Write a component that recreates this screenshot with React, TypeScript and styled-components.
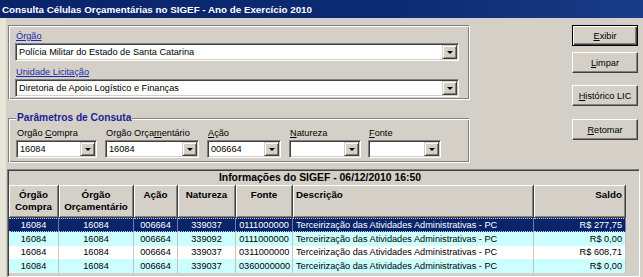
import React from 'react';
import styled, { createGlobalStyle } from 'styled-components';

const Global = createGlobalStyle`
  html, body { margin: 0; padding: 0; background: #d4d0c8; }
  body { font-family: "Liberation Sans", Arial, sans-serif; font-size: 9.2px; color: #000; }
  * { box-sizing: border-box; }
`;

const Window = styled.div`
  width: 643px;
  height: 277px;
  overflow: hidden;
  background: #d4d0c8;
  display: flex;
  flex-direction: column;
`;

const TitleBar = styled.div`
  height: 18px;
  flex: none;
  background: linear-gradient(to right, #0a246a 0%, #0c2a72 60%, #1a3c86 100%);
  color: #fff;
  font-weight: bold;
  font-size: 9.8px;
  display: flex;
  align-items: center;
  padding-left: 2px;
  white-space: nowrap;
`;

const Frame = styled.div`
  flex: 1;
  display: flex;
  min-height: 0;
`;

const SideStrip = styled.div`
  width: 6px;
  flex: none;
  background: #e7e5d7;
`;

const Main = styled.div`
  flex: 1;
  display: flex;
  flex-direction: column;
  min-width: 0;
`;

const TopArea = styled.div`
  display: flex;
  padding-top: 7px;
`;

const Forms = styled.div`
  width: 462px;
  margin-left: 2px;
  display: flex;
  flex-direction: column;
`;

const GroupBox = styled.div<{ $mt?: number; $pad: string }>`
  margin-top: ${p => p.$mt ?? 0}px;
  border: 1px solid;
  border-color: #808080 #fff #fff #808080;
  box-shadow: inset 1px 1px 0 #fff, inset -1px -1px 0 #808080;
  padding: ${p => p.$pad};
  display: flex;
  flex-direction: column;
`;

const GroupCaption = styled.div`
  margin: -7px 0 0 0;
  padding: 0 1px;
  width: fit-content;
  background: #d4d0c8;
  color: #1c1c98;
  font-weight: bold;
  font-size: 10.2px;
  line-height: 12px;
`;

const LinkLabel = styled.div<{ $mt?: number }>`
  margin-top: ${p => p.$mt ?? 0}px;
  padding-left: 1px;
  color: #1a2ab0;
  text-decoration: underline;
  line-height: 12px;
  margin-bottom: 1px;
`;

const FieldRow = styled.div`
  display: flex;
  margin-top: 3px;
`;

const Field = styled.div<{ $mr: number }>`
  display: flex;
  flex-direction: column;
  margin-right: ${p => p.$mr}px;
`;

const FieldLabel = styled.div`
  line-height: 12px;
  margin-bottom: 1px;
  padding-left: 1px;
  white-space: nowrap;
`;

const Combo = styled.div<{ $w: number }>`
  width: ${p => p.$w}px;
  height: 18px;
  display: flex;
  background: #fff;
  border: 1px solid;
  border-color: #808080 #fff #fff #808080;
  box-shadow: inset 1px 1px 0 #404040, inset -1px -1px 0 #d4d0c8;
  padding: 1px;
`;

const ComboText = styled.div`
  flex: 1;
  padding-left: 2px;
  line-height: 14px;
  white-space: nowrap;
  overflow: hidden;
`;

const DropBtn = styled.div`
  width: 15px;
  flex: none;
  background: #d4d0c8;
  border: 1px solid;
  border-color: #d4d0c8 #404040 #404040 #d4d0c8;
  box-shadow: inset 1px 1px 0 #fff, inset -1px -1px 0 #808080;
  display: flex;
  align-items: center;
  justify-content: center;
  &::after {
    content: '';
    border-left: 3px solid transparent;
    border-right: 3px solid transparent;
    border-top: 3px solid #000;
    margin-top: 1px;
  }
`;

const Buttons = styled.div`
  margin-left: auto;
  margin-right: 5px;
  width: 66px;
  display: flex;
  flex-direction: column;
`;

const Button = styled.div<{ $mt: number; $default?: boolean }>`
  margin-top: ${p => p.$mt}px;
  height: 21px;
  display: flex;
  align-items: center;
  justify-content: center;
  background: #d4d0c8;
  border: 1px solid;
  border-color: ${p => (p.$default ? '#000' : '#fff #404040 #404040 #fff')};
  box-shadow: ${p =>
    p.$default
      ? 'inset 1px 1px 0 #fff, inset -1px -1px 0 #404040, inset -2px -2px 0 #808080'
      : 'inset -1px -1px 0 #808080'};
  white-space: nowrap;
`;

const Grid = styled.div`
  margin: 6px 3px 0 1px;
  flex: 1;
  border: 1px solid;
  border-color: #808080 #fff #fff #808080;
  box-shadow: inset 1px 1px 0 #404040;
  padding: 1px 0 0 1px;
  display: flex;
  flex-direction: column;
  min-height: 0;
`;

const GridCaption = styled.div`
  height: 14px;
  line-height: 14px;
  text-align: center;
  font-weight: bold;
  font-size: 10.4px;
  padding-right: 8px;
`;

const Table = styled.table`
  border-collapse: separate;
  border-spacing: 0;
  table-layout: fixed;
  width: 617px;
`;

const Th = styled.th<{ $align?: string }>`
  height: 33px;
  vertical-align: top;
  text-align: ${p => p.$align ?? 'center'};
  font-weight: bold;
  font-size: 9.8px;
  line-height: 12px;
  padding: 4px 3px 0 3px;
  border-right: 1px solid #404040;
  border-bottom: 1px solid #404040;
  box-shadow: inset 1px 1px 0 #fff, inset -1px -1px 0 #808080;
  background: #d4d0c8;
`;

type RowKind = 'sel' | 'cyan' | 'white';

const Tr = styled.tr<{ $kind: RowKind }>`
  background: ${p => (p.$kind === 'sel' ? '#0a246a' : p.$kind === 'cyan' ? '#ccffff' : '#fff')};
  color: ${p => (p.$kind === 'sel' ? '#fff' : '#000')};
  & > td {
    border-right: 1px solid ${p => (p.$kind === 'sel' ? '#6b7aa8' : '#c4c4c4')};
    ${p => (p.$kind === 'sel' ? 'border-top: 1px dotted #c8c8ff; border-bottom: 1px dotted #c8c8ff;' : '')}
  }
`;

const Td = styled.td<{ $align?: string }>`
  height: 13.5px;
  padding: 0 3px;
  text-align: ${p => p.$align ?? 'center'};
  line-height: 12px;
  white-space: nowrap;
  overflow: hidden;
`;

const U = styled.span`
  text-decoration: underline;
`;

const rows: { kind: RowKind; nat: string; fonte: string; saldo: string }[] = [
  { kind: 'sel', nat: '339037', fonte: '0111000000', saldo: 'R$ 277,75' },
  { kind: 'cyan', nat: '339092', fonte: '0111000000', saldo: 'R$ 0,00' },
  { kind: 'white', nat: '339037', fonte: '0311000000', saldo: 'R$ 608,71' },
  { kind: 'cyan', nat: '339037', fonte: '0360000000', saldo: 'R$ 0,00' },
];

const colWidths = [50, 75, 44, 58, 57, 241, 92];

export default function App() {
  return (
    <>
      <Global />
      <Window>
        <TitleBar>Consulta Células Orçamentárias no SIGEF - Ano de Exercício 2010</TitleBar>
        <Frame>
          <SideStrip />
          <Main>
            <TopArea>
              <Forms>
                <GroupBox $pad="4px 10px 2px 6px">
                  <LinkLabel>Órgão</LinkLabel>
                  <Combo $w={444}>
                    <ComboText>Polícia Militar do Estado de Santa Catarina</ComboText>
                    <DropBtn />
                  </Combo>
                  <LinkLabel $mt={5}>Unidade Licitação</LinkLabel>
                  <Combo $w={444}>
                    <ComboText>Diretoria de Apoio Logístico e Finanças</ComboText>
                    <DropBtn />
                  </Combo>
                </GroupBox>
                <GroupBox $mt={18} $pad="0 6px 4px 7px">
                  <GroupCaption>Parâmetros de Consuta</GroupCaption>
                  <FieldRow>
                    <Field $mr={8}>
                      <FieldLabel>Orgão <U>C</U>ompra</FieldLabel>
                      <Combo $w={81}>
                        <ComboText>16084</ComboText>
                        <DropBtn />
                      </Combo>
                    </Field>
                    <Field $mr={8}>
                      <FieldLabel>Orgão Orça<U>m</U>entário</FieldLabel>
                      <Combo $w={94}>
                        <ComboText>16084</ComboText>
                        <DropBtn />
                      </Combo>
                    </Field>
                    <Field $mr={8}>
                      <FieldLabel><U>A</U>ção</FieldLabel>
                      <Combo $w={74}>
                        <ComboText>006664</ComboText>
                        <DropBtn />
                      </Combo>
                    </Field>
                    <Field $mr={7}>
                      <FieldLabel><U>N</U>atureza</FieldLabel>
                      <Combo $w={72}>
                        <ComboText />
                        <DropBtn />
                      </Combo>
                    </Field>
                    <Field $mr={0}>
                      <FieldLabel><U>F</U>onte</FieldLabel>
                      <Combo $w={73}>
                        <ComboText />
                        <DropBtn />
                      </Combo>
                    </Field>
                  </FieldRow>
                </GroupBox>
              </Forms>
              <Buttons>
                <Button $mt={0} $default><U>E</U>xibir</Button>
                <Button $mt={6}><U>L</U>impar</Button>
                <Button $mt={12}><U>H</U>istórico LIC</Button>
                <Button $mt={13}><U>R</U>etomar</Button>
              </Buttons>
            </TopArea>
            <Grid>
              <GridCaption>Informações do SIGEF - 06/12/2010 16:50</GridCaption>
              <Table>
                <colgroup>
                  {colWidths.map((w, i) => (
                    <col key={i} style={{ width: w }} />
                  ))}
                </colgroup>
                <thead>
                  <tr>
                    <Th>Órgão<br />Compra</Th>
                    <Th>Órgão<br />Orçamentário</Th>
                    <Th>Ação</Th>
                    <Th>Natureza</Th>
                    <Th>Fonte</Th>
                    <Th $align="left">Descrição</Th>
                    <Th $align="right">Saldo</Th>
                  </tr>
                </thead>
                <tbody>
                  {rows.map((r, i) => (
                    <Tr key={i} $kind={r.kind}>
                      <Td>16084</Td>
                      <Td>16084</Td>
                      <Td>006664</Td>
                      <Td>{r.nat}</Td>
                      <Td>{r.fonte}</Td>
                      <Td $align="left">Terceirização das Atividades Administrativas - PC</Td>
                      <Td $align="right">{r.saldo}</Td>
                    </Tr>
                  ))}
                </tbody>
              </Table>
            </Grid>
          </Main>
        </Frame>
      </Window>
    </>
  );
}
